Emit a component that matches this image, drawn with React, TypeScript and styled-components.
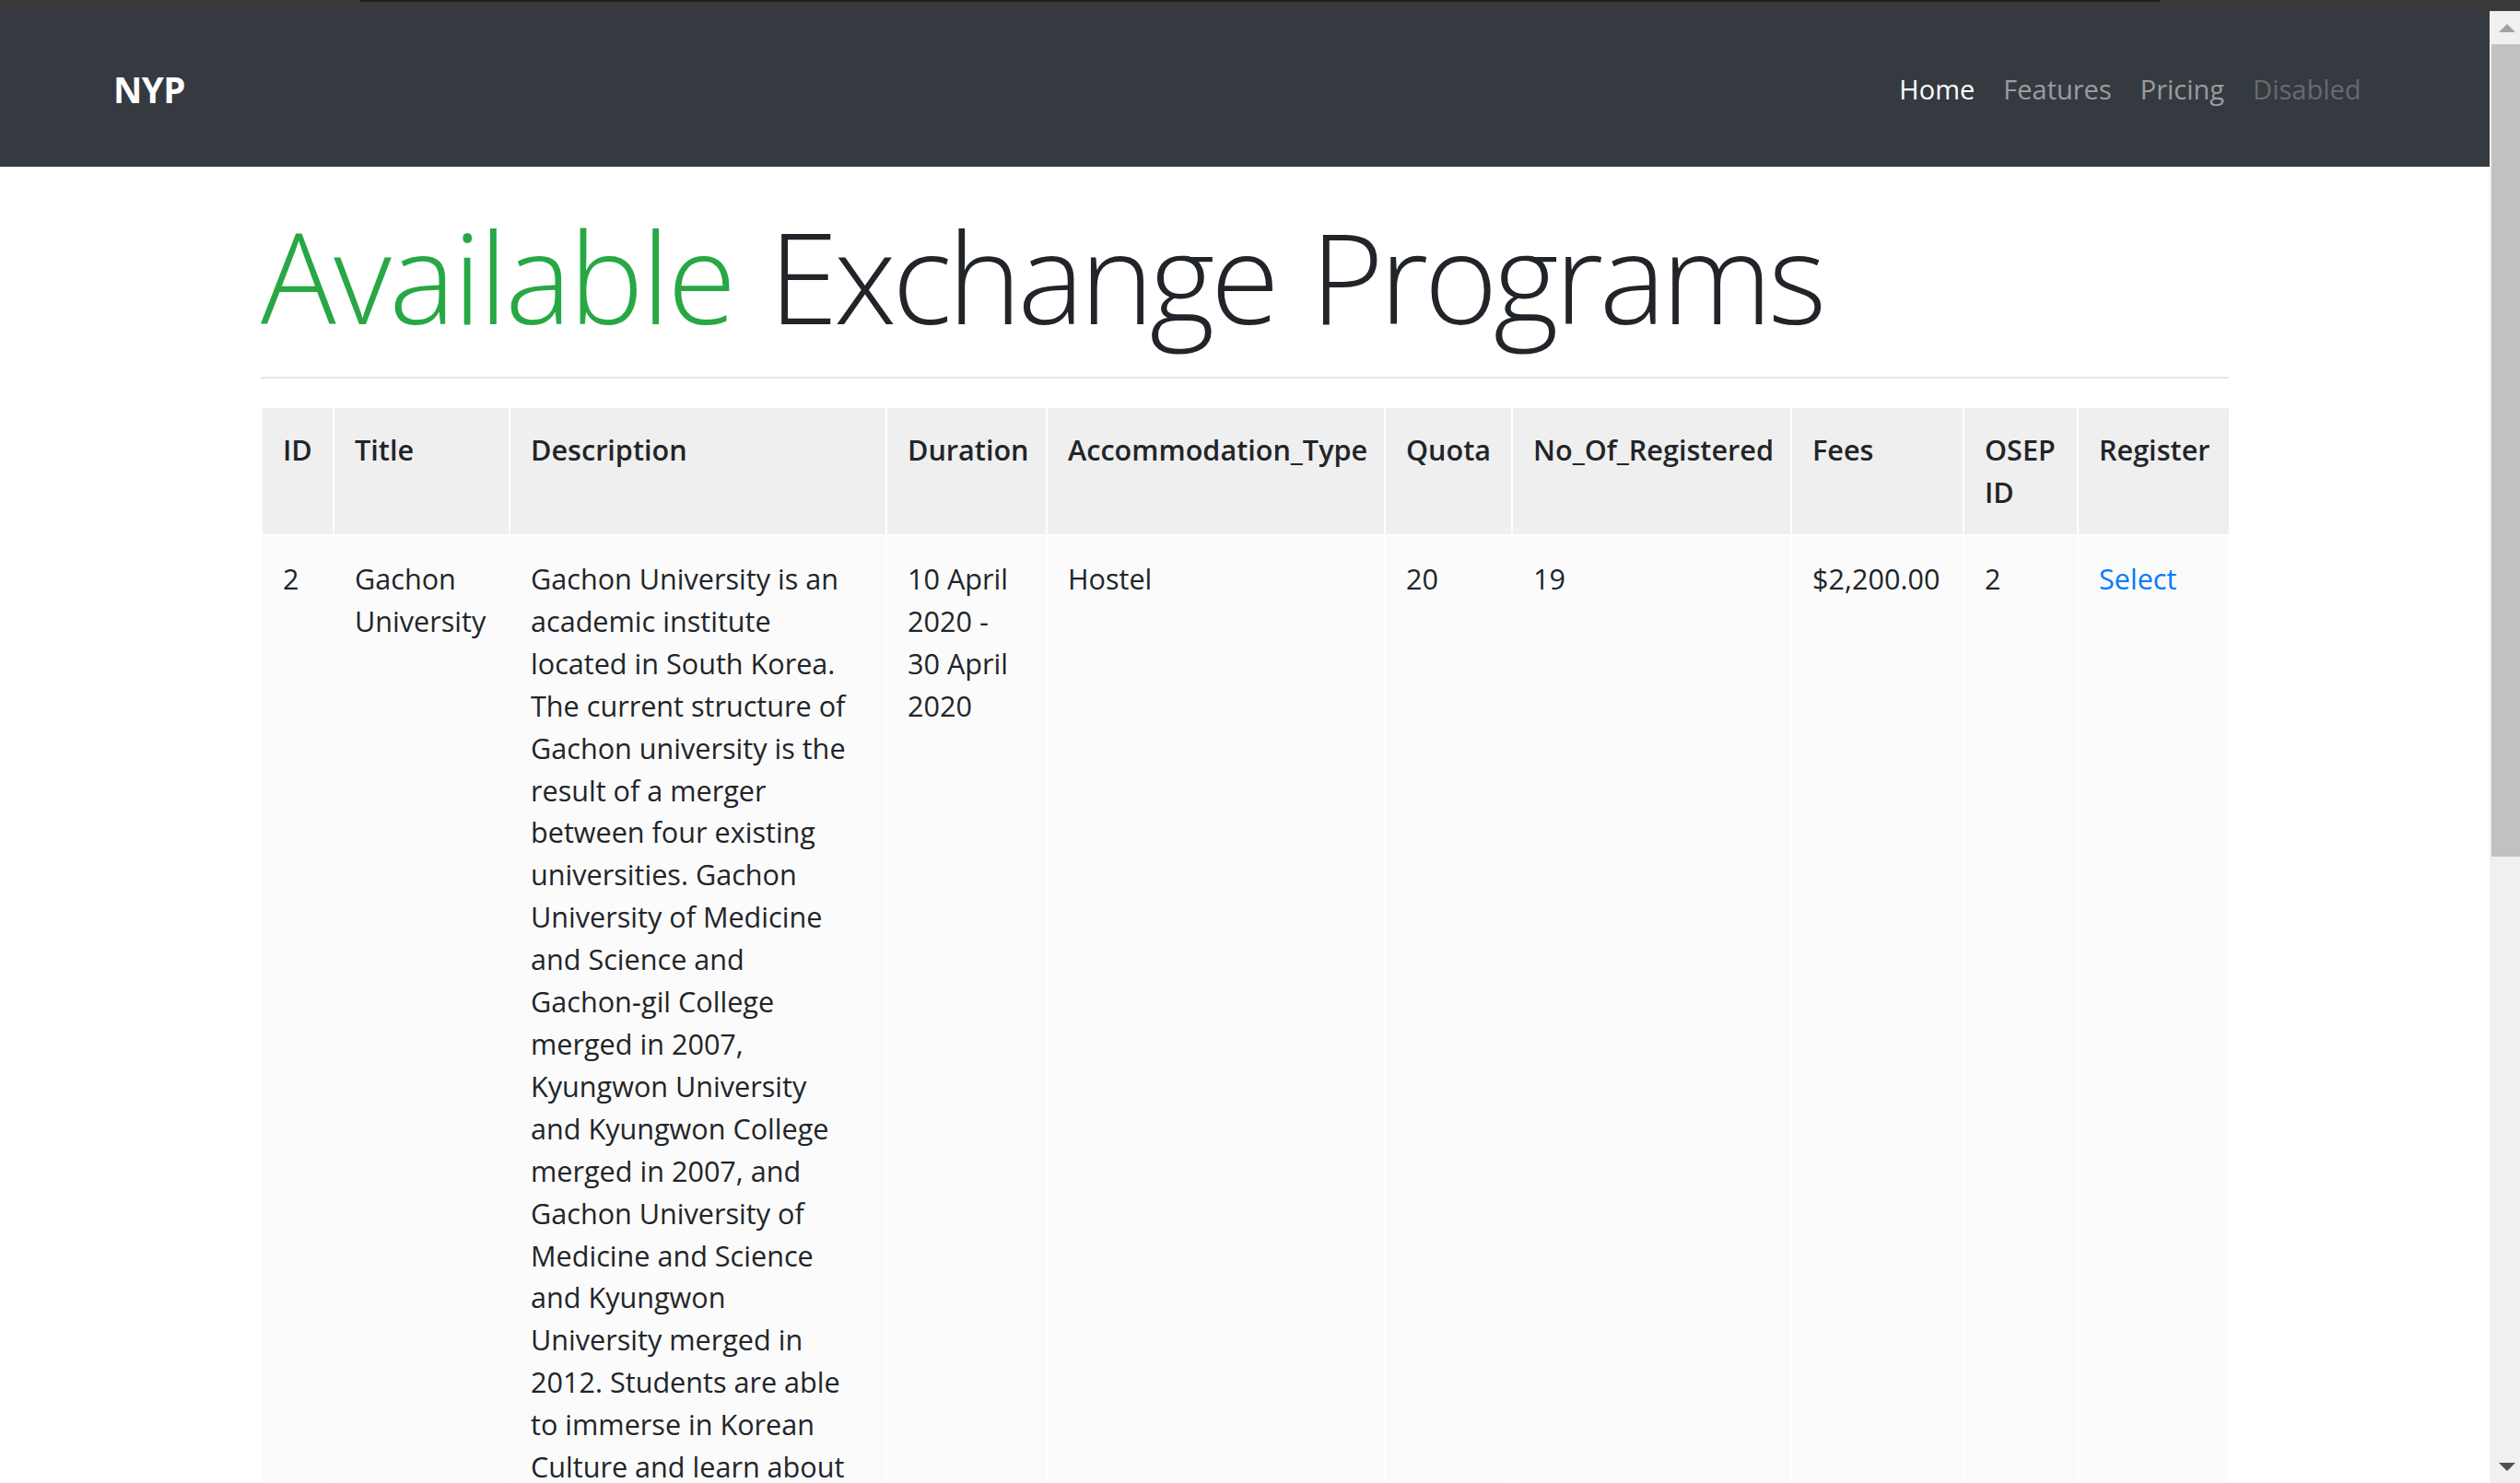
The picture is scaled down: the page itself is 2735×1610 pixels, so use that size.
import React from "react";
import styled, { createGlobalStyle } from "styled-components";

const GlobalStyle = createGlobalStyle`
  html, body {
    margin: 0;
    padding: 0;
    background: #fff;
    overflow: hidden;
  }
  body {
    font-family: "Open Sans", "Liberation Sans", sans-serif;
    color: #212529;
  }
`;

const Screen = styled.div`
  width: 2735px;
  height: 1610px;
  display: flex;
  flex-direction: column;
  overflow: hidden;
`;

const WindowEdge = styled.div`
  height: 12px;
  flex: none;
  background: #3a3a3a;
  display: flex;
  padding-left: 390px;
  padding-right: 390px;
`;

const EdgeLine = styled.div`
  flex: 1;
  height: 2px;
  background: #1f1f1f;
  border-radius: 0 0 3px 3px;
`;

const Viewport = styled.div`
  flex: 1;
  display: flex;
  min-height: 0;
`;

const Page = styled.div`
  flex: 1;
  min-width: 0;
  overflow: hidden;
`;

const ScrollTrack = styled.div`
  width: 33px;
  flex: none;
  background: #f0f0f0;
  display: flex;
  flex-direction: column;
  align-items: flex-end;
`;

const ArrowBox = styled.div`
  width: 33px;
  height: 36px;
  display: flex;
  align-items: center;
  justify-content: center;
  padding-left: 4px;
  box-sizing: border-box;
`;

const Thumb = styled.div`
  width: 31px;
  height: 882px;
  background: #c1c1c1;
`;

const TrackRest = styled.div`
  flex: 1;
`;

const Navbar = styled.nav`
  height: 169px;
  background: #343a40;
  display: flex;
  align-items: center;
  justify-content: space-between;
  padding: 0 124px 0 123px;
`;

const Brand = styled.a`
  color: #fff;
  font-weight: 700;
  font-size: 38.5px;
  letter-spacing: -0.5px;
  text-decoration: none;
`;

const NavList = styled.div`
  display: flex;
  align-items: center;
`;

const NavLink = styled.a<{ $tone: "active" | "idle" | "disabled" }>`
  font-size: 29px;
  padding: 0 15.5px;
  text-decoration: none;
  color: ${(p) =>
    p.$tone === "active"
      ? "#fff"
      : p.$tone === "idle"
      ? "rgba(255,255,255,0.5)"
      : "rgba(255,255,255,0.25)"};
`;

const Container = styled.main`
  width: 2136px;
  margin: 0 auto;
  padding-top: 37px;
`;

const Heading = styled.h1`
  margin: 0;
  font-weight: 300;
  font-size: 136px;
  line-height: 1.2;
  letter-spacing: -4.45px;
  word-spacing: 7px;
  color: #212529;
  white-space: nowrap;
`;

const Green = styled.span`
  color: #28a745;
  letter-spacing: -2.5px;
`;

const Rule = styled.hr`
  margin: 28px 0 32px;
  border: 0;
  border-top: 2px solid #e6e6e6;
`;

const Table = styled.table`
  width: 100%;
  table-layout: fixed;
  border-collapse: collapse;
  font-size: 30.6px;
  line-height: 45.9px;
`;

const HeadCell = styled.th`
  background: #efefef;
  font-weight: 600;
  text-align: left;
  vertical-align: top;
  padding: 23px 22px 22px;
  border: 2px solid #fff;
  border-top: 0;
`;

const Cell = styled.td<{ $wrapNarrow?: boolean }>`
  background: #fbfbfb;
  vertical-align: top;
  padding: 24px ${(p) => (p.$wrapNarrow ? "35px" : "22px")} 22px 22px;
  border: 2px solid #fff;
`;

const SelectLink = styled.a`
  color: #007bff;
  text-decoration: none;
`;

const columns = [
  { label: "ID", width: 78 },
  { label: "Title", width: 191 },
  { label: "Description", width: 409 },
  { label: "Duration", width: 174 },
  { label: "Accommodation_Type", width: 367 },
  { label: "Quota", width: 138 },
  { label: "No_Of_Registered", width: 303 },
  { label: "Fees", width: 187 },
  { label: "OSEP ID", width: 124 },
  { label: "Register", width: 165 },
];

// non-breaking hyphen keeps "Gachon‑gil" on one line, as in the original
const description =
  "Gachon University is an academic institute located in South Korea. The current structure of Gachon university is the result of a merger between four existing universities. Gachon University of Medicine and Science and Gachon\u2011gil College merged in 2007, Kyungwon University and Kyungwon College merged in 2007, and Gachon University of Medicine and Science and Kyungwon University merged in 2012. Students are able to immerse in Korean Culture and learn about the history of the country through its many cultural activities.";

const App: React.FC = () => {
  return (
    <>
      <GlobalStyle />
      <Screen>
        <WindowEdge>
          <EdgeLine />
        </WindowEdge>
        <Viewport>
          <Page>
            <Navbar>
              <Brand href="#">NYP</Brand>
              <NavList>
                <NavLink $tone="active" href="#">Home</NavLink>
                <NavLink $tone="idle" href="#">Features</NavLink>
                <NavLink $tone="idle" href="#">Pricing</NavLink>
                <NavLink $tone="disabled" href="#">Disabled</NavLink>
              </NavList>
            </Navbar>
            <Container>
              <Heading>
                <Green>Available</Green> Exchange Programs
              </Heading>
              <Rule />
              <Table>
                <colgroup>
                  {columns.map((c) => (
                    <col key={c.label} style={{ width: c.width }} />
                  ))}
                </colgroup>
                <thead>
                  <tr>
                    {columns.map((c) => (
                      <HeadCell key={c.label}>{c.label}</HeadCell>
                    ))}
                  </tr>
                </thead>
                <tbody>
                  <tr>
                    <Cell>2</Cell>
                    <Cell>Gachon University</Cell>
                    <Cell $wrapNarrow>{description}</Cell>
                    <Cell>10 April 2020 - 30 April 2020</Cell>
                    <Cell>Hostel</Cell>
                    <Cell>20</Cell>
                    <Cell>19</Cell>
                    <Cell>$2,200.00</Cell>
                    <Cell>2</Cell>
                    <Cell>
                      <SelectLink href="#">Select</SelectLink>
                    </Cell>
                  </tr>
                </tbody>
              </Table>
            </Container>
          </Page>
          <ScrollTrack>
            <ArrowBox>
              <svg width="18" height="9" viewBox="0 0 18 9">
                <polygon points="9,0 18,9 0,9" fill="#a3a3a3" />
              </svg>
            </ArrowBox>
            <Thumb />
            <TrackRest />
            <ArrowBox>
              <svg width="18" height="9" viewBox="0 0 18 9">
                <polygon points="0,0 18,0 9,9" fill="#505050" />
              </svg>
            </ArrowBox>
          </ScrollTrack>
        </Viewport>
      </Screen>
    </>
  );
};

export default App;
